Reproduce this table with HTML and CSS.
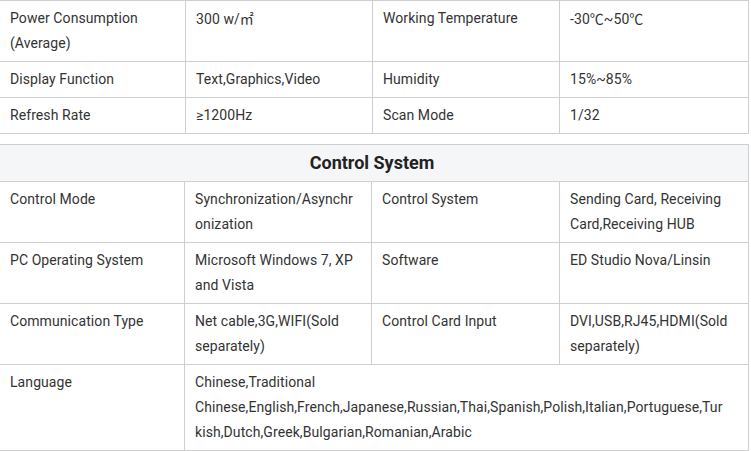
FILE: index.html
```html
<!DOCTYPE html>
<html>
<head>
<meta charset="utf-8">
<link rel="stylesheet" href="styles.css">
</head>
<body>
<div class="page">
  <table class="spec first">
    <colgroup><col class="c1"><col class="c2"><col class="c3"><col class="c4"></colgroup>
    <tr>
      <td>Power Consumption (Average)</td>
      <td>300 w/<span class="cjk">㎡</span></td>
      <td>Working Temperature</td>
      <td>-30<span class="cjk">℃</span>~50<span class="cjk">℃</span></td>
    </tr>
    <tr>
      <td>Display Function</td>
      <td>Text,Graphics,Video</td>
      <td>Humidity</td>
      <td>15%~85%</td>
    </tr>
    <tr>
      <td>Refresh Rate</td>
      <td>≥1200Hz</td>
      <td>Scan Mode</td>
      <td>1/32</td>
    </tr>
  </table>

  <table class="spec second">
    <colgroup><col class="c1"><col class="c2"><col class="c3"><col class="c4"></colgroup>
    <tr><th colspan="4">Control System</th></tr>
    <tr>
      <td>Control Mode</td>
      <td>Synchronization/Asynchronization</td>
      <td>Control System</td>
      <td>Sending Card, Receiving Card,Receiving HUB</td>
    </tr>
    <tr>
      <td>PC Operating System</td>
      <td>Microsoft Windows 7, XP and Vista</td>
      <td>Software</td>
      <td>ED Studio Nova/Linsin</td>
    </tr>
    <tr>
      <td>Communication Type</td>
      <td>Net cable,3G,WIFI(Sold separately)</td>
      <td>Control Card Input</td>
      <td>DVI,USB,RJ45,HDMI(Sold separately)</td>
    </tr>
    <tr>
      <td>Language</td>
      <td colspan="3" class="wide">Chinese,Traditional Chinese,English,French,Japanese,Russian,Thai,Spanish,Polish,Italian,Portuguese,Turkish,Dutch,Greek,Bulgarian,Romanian,Arabic</td>
    </tr>
  </table>
</div>
</body>
</html>
```
FILE: styles.css
```css
html, body {
  margin: 0;
  padding: 0;
  background: #fff;
}
body {
  font-family: Roboto, "Noto Sans CJK SC", sans-serif;
  font-size: 14px;
  color: #333;
}
.page {
  margin-left: -1px;
  width: 749px;
}
.spec {
  width: 749px;
  border-collapse: collapse;
  table-layout: fixed;
}
.first .c1 { width: 186px; }
.first .c2 { width: 187px; }
.first .c3 { width: 187px; }
.first .c4 { width: 189px; }
.second .c1 { width: 185px; }
.second .c2 { width: 187px; }
.second .c3 { width: 188px; }
.second .c4 { width: 189px; }
.spec td {
  border: 1px solid #cfcfcf;
  padding: 5px 12px 5px 10px;
  line-height: 25px;
  letter-spacing: 0.08px;
  vertical-align: top;
  text-align: left;
  word-wrap: break-word;
  overflow-wrap: break-word;
}
.spec td.wide {
  padding-right: 20px;
}
.spec th {
  border: 1px solid #cfcfcf;
  background: #f5f6f8;
  font-size: 18px;
  font-weight: bold;
  color: #222;
  line-height: 26px;
  padding: 5px 14px 5px 10px;
  text-align: center;
}
.second {
  margin-top: 10px;
}
.cjk {
  font-family: "Noto Sans CJK SC", sans-serif;
  letter-spacing: 0;
}
```
